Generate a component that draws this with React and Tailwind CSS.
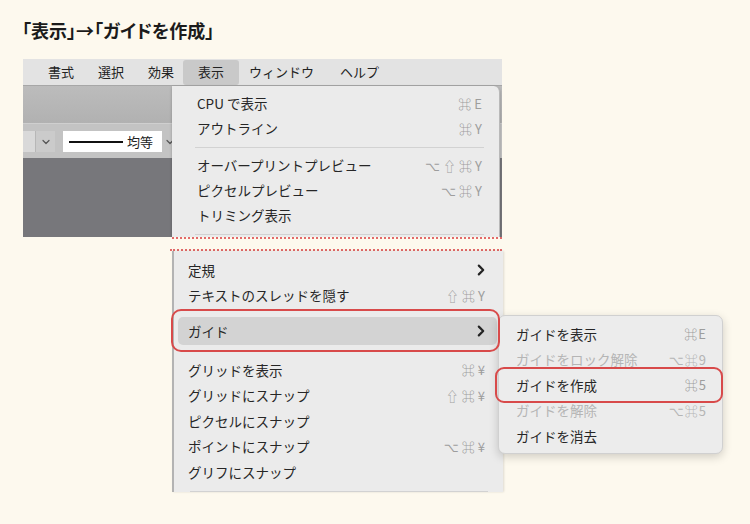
import React from 'react';

const JP = "font-['Noto_Sans_CJK_JP','Noto_Sans','DejaVu_Sans',sans-serif]";

function Chevron() {
  return (
    <svg width="8" height="12" viewBox="0 0 8 12">
      <path d="M1.8 1.6 6.2 6l-4.4 4.4" fill="none" stroke="#242424" strokeWidth="2.2" strokeLinecap="round" strokeLinejoin="round" />
    </svg>
  );
}

function SmallChevron() {
  return (
    <svg width="8" height="6" viewBox="0 0 8 6">
      <path d="M1 1.5 4 4.5 7 1.5" fill="none" stroke="#555" strokeWidth="1.2" strokeLinecap="round" strokeLinejoin="round" />
    </svg>
  );
}

function Keys({ keys, tight }) {
  return (
    <span className={`flex items-center text-[13px] text-[#9d9d9d] ${tight ? 'gap-[1px]' : 'gap-[3px]'}`}>
      {keys.map((k, i) => (
        <span key={i}>{k}</span>
      ))}
    </span>
  );
}

function Row({ label, keys, chevron, highlight }) {
  return (
    <div
      className={`ml-[4px] mr-[6px] flex h-[25.5px] items-center justify-between pl-[10px] pr-[12px] ${
        highlight ? 'h-[28px] rounded-[5px] bg-[#d3d3d3]' : ''
      }`}
    >
      <span>{label}</span>
      {keys && <Keys keys={keys} />}
      {chevron && <Chevron />}
    </div>
  );
}

function TopRow({ label, keys }) {
  return (
    <div className="flex h-[25px] items-center justify-between pl-[25px] pr-[17px]">
      <span>{label}</span>
      {keys && <Keys keys={keys} />}
    </div>
  );
}

function SubRow({ label, keys, disabled }) {
  return (
    <div className={`flex h-[25.6px] items-center justify-between pl-[17px] pr-[16px] ${disabled ? 'text-[#b5b5b5]' : ''}`}>
      <span>{label}</span>
      <span className={`flex items-center gap-[1px] text-[13px] ${disabled ? 'text-[#b5b5b5]' : 'text-[#9d9d9d]'}`}>
        {keys.map((k, i) => (
          <span key={i}>{k}</span>
        ))}
      </span>
    </div>
  );
}

function TopScreenshot() {
  return (
    <div className="relative ml-[23px] mt-[20px] flex h-[178px] w-[479px] flex-col overflow-hidden">
      {/* menu bar */}
      <div className="flex h-[27px] shrink-0 items-center border-b border-[#a7a7a7] bg-[#e3e3e3] pl-[13px] text-[13px] text-[#222]">
        <span className="px-[12px]">書式</span>
        <span className="px-[12px]">選択</span>
        <span className="px-[12px]">効果</span>
        <span className="-ml-[3px] flex h-[25px] items-center rounded-[3px] bg-[#c9c9c9] px-[15px]">表示</span>
        <span className="pl-[10px] pr-[12px]">ウィンドウ</span>
        <span className="pl-[14px]">ヘルプ</span>
      </div>
      {/* toolbar */}
      <div className="h-[37px] shrink-0 bg-gradient-to-b from-[#bcbcbc] to-[#b1b1b1]" />
      {/* control row */}
      <div className="flex h-[35px] shrink-0 items-start border-t border-[#cfcfcf] bg-[#c3c3c3] pt-[7px]">
        <div className="h-[21px] w-[12px] bg-[#d9d9d9]" />
        <div className="flex h-[21px] w-[20px] items-center justify-center border-l border-[#b7b7b7] bg-[#cbcbcb]">
          <SmallChevron />
        </div>
        <div className="ml-[8px] flex h-[21px] w-[99px] items-center gap-[4px] bg-white pl-[6px] text-[13px] text-[#222]">
          <div className="h-[2px] w-[54px] bg-[#111]" />
          <span>均等</span>
        </div>
        <div className="ml-[4px] flex h-[21px] items-center">
          <SmallChevron />
        </div>
      </div>
      {/* canvas */}
      <div className="flex-1 bg-[#77777b]" />
      {/* open menu */}
      <div className="absolute left-[149px] top-[27px] h-[160px] w-[328px] rounded-tr-[6px] border-r border-[#b9b9b9] bg-[#ebebeb] pt-[5px] text-[13.5px] text-[#262626] shadow-[0_1px_3px_rgba(0,0,0,0.25)]">
        <TopRow label="CPU で表示" keys={['⌘', 'E']} />
        <TopRow label="アウトライン" keys={['⌘', 'Y']} />
        <div className="flex h-[12px] items-center pl-[23px] pr-[15px]">
          <div className="h-px w-full bg-[#d2d2d2]" />
        </div>
        <TopRow label="オーバープリントプレビュー" keys={['⌥', '⇧', '⌘', 'Y']} />
        <TopRow label="ピクセルプレビュー" keys={['⌥', '⌘', 'Y']} />
        <TopRow label="トリミング表示" />
        <div className="flex h-[12px] items-center pl-[23px] pr-[15px]">
          <div className="h-px w-full bg-[#d2d2d2]" />
        </div>
      </div>
    </div>
  );
}

function BottomMenu() {
  return (
    <div className="ml-[172px] w-[331px] border-l-2 border-[#b3b3b3] bg-[#ebebeb] pt-[6px] text-[13.5px] text-[#262626] shadow-[1px_0_2px_rgba(0,0,0,0.12)]">
      <Row label="定規" chevron />
      <Row label="テキストのスレッドを隠す" keys={['⇧', '⌘', 'Y']} />
      <div className="h-[9px]" />
      <Row label="ガイド" chevron highlight />
      <div className="h-[12px]" />
      <Row label="グリッドを表示" keys={['⌘', '¥']} />
      <Row label="グリッドにスナップ" keys={['⇧', '⌘', '¥']} />
      <Row label="ピクセルにスナップ" />
      <Row label="ポイントにスナップ" keys={['⌥', '⌘', '¥']} />
      <Row label="グリフにスナップ" />
      <div className="flex h-[7.5px] items-end pl-[16px] pr-[15px]">
        <div className="h-px w-full bg-[#d2d2d2]" />
      </div>
    </div>
  );
}

export default function App() {
  return (
    <div className={`relative h-[524px] w-[750px] overflow-hidden bg-[#fdf9ee] ${JP}`}>
      <div className="pl-[22px] pt-[21px] text-[18px] font-bold leading-[18px] text-[#1b1b1b] [font-feature-settings:'palt']">
        「表示」→「ガイドを作成」
      </div>

      <TopScreenshot />

      {/* cut marks */}
      <div className="ml-[172px] w-[330px] border-t-2 border-dotted border-[#e26a6a]" />
      <div className="ml-[170px] mt-[10px] w-[332px] border-t-2 border-dotted border-[#e26a6a]" />

      <BottomMenu />

      {/* submenu */}
      <div className="absolute left-[498px] top-[315px] h-[139px] w-[225px] rounded-[7px] border border-[#d0d0d0] bg-[#ececec] pt-[5px] text-[13.5px] text-[#262626] shadow-[0_3px_10px_rgba(0,0,0,0.18)]">
        <SubRow label="ガイドを表示" keys={['⌘', 'E']} />
        <SubRow label="ガイドをロック解除" keys={['⌥', '⌘', '9']} disabled />
        <SubRow label="ガイドを作成" keys={['⌘', '5']} />
        <SubRow label="ガイドを解除" keys={['⌥', '⌘', '5']} disabled />
        <SubRow label="ガイドを消去" keys={[]} />
      </div>

      {/* red highlight outlines */}
      <div className="absolute left-[171px] top-[309px] h-[43px] w-[329px] rounded-[10px] border-2 border-[#d84a4a]" />
      <div className="absolute left-[495px] top-[367px] h-[36px] w-[228px] rounded-[9px] border-2 border-[#d84a4a]" />
    </div>
  );
}
